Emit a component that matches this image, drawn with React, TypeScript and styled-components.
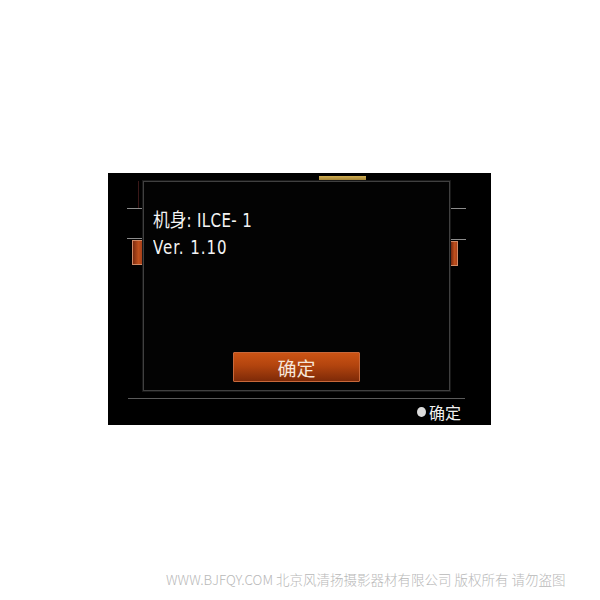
import React from "react";
import styled, { createGlobalStyle } from "styled-components";

const Global = createGlobalStyle`
  html, body { margin: 0; padding: 0; background: #ffffff; }
  * { box-sizing: border-box; }
`;

const Page = styled.div`
  width: 600px;
  height: 600px;
  display: flex;
  flex-direction: column;
  padding-top: 173px;
  padding-left: 108px;
  background: #ffffff;
  overflow: hidden;
`;

const Screen = styled.div`
  position: relative;
  width: 383px;
  height: 252px;
  background: #000000;
  display: flex;
  flex-direction: column;
`;

const TopBar = styled.div`
  height: 8px;
  display: flex;
  padding-left: 211px;
  padding-top: 3px;
`;

const GoldBar = styled.div`
  width: 47px;
  height: 5px;
  background: linear-gradient(#d0ae52, #9a7a30);
`;

const Middle = styled.div`
  height: 217px;
  display: flex;
`;

const Rail = styled.div<{ $width: number; $padTop: number; $padLeft: number }>`
  width: ${(p) => p.$width}px;
  padding-top: ${(p) => p.$padTop}px;
  padding-left: ${(p) => p.$padLeft}px;
  display: flex;
  flex-direction: column;
  align-items: flex-start;
`;

const Fill = styled.div`
  flex: 1;
`;

const VLine = styled.div`
  width: 1px;
  height: 27px;
  margin-left: 11px;
  background: #3a1818;
`;

const Tick = styled.div<{ $gapAfter?: number }>`
  width: 16px;
  height: 1px;
  background: #8c8c8c;
  margin-bottom: ${(p) => p.$gapAfter ?? 0}px;
`;

const Slider = styled.div<{ $width: number; $offset: number }>`
  width: ${(p) => p.$width}px;
  height: 25px;
  margin-top: 1px;
  margin-left: ${(p) => p.$offset}px;
  border: 1px solid #d08a66;
  background: linear-gradient(90deg, #7a2a10, #c0501c 60%, #a8401a);
`;

const Rule = styled.div`
  margin-left: 20px;
  width: 337px;
  height: 1px;
  background: #5a5a5a;
`;

const Footer = styled.div`
  display: flex;
  justify-content: flex-end;
  align-items: center;
  gap: 3px;
  padding-right: 30px;
  margin-top: 3px;
  font-family: "Noto Sans CJK SC", "DejaVu Sans", sans-serif;
  font-size: 16px;
  line-height: 20px;
  color: #f0f0f0;
`;

const Dot = styled.span`
  width: 9px;
  height: 10px;
  border-radius: 50%;
  background: #dcdcdc;
  display: inline-block;
`;

const Dialog = styled.div`
  position: absolute;
  left: 35px;
  top: 8px;
  width: 307px;
  height: 210px;
  background: #030303;
  border: 1px solid #404040;
  box-shadow: 0 0 0 1px #181818;
  display: flex;
  flex-direction: column;
  padding: 23px 0 8px 9px;
`;

const InfoLine = styled.div<{ $spacing: number }>`
  font-family: "DejaVu Sans Condensed", "DejaVu Sans", "Noto Sans CJK SC", sans-serif;
  font-stretch: condensed;
  font-size: 19px;
  line-height: 27px;
  color: #f4f4f4;
  white-space: pre;
  letter-spacing: ${(p) => p.$spacing}px;
  transform: scaleX(0.88);
  transform-origin: left center;
`;

const Cjk = styled.span`
  font-family: "Noto Sans CJK SC", sans-serif;
  letter-spacing: 0;
`;

const OkButton = styled.div`
  margin-top: auto;
  align-self: center;
  margin-left: -9px;
  width: 127px;
  height: 30px;
  border: 1px solid #c8683a;
  border-radius: 1px;
  background: linear-gradient(#cc5414 0%, #b2440e 45%, #7e2a08 100%);
  display: flex;
  align-items: center;
  justify-content: center;
  font-family: "Noto Sans CJK SC", sans-serif;
  font-size: 19px;
  color: #f6e6da;
`;

const Watermark = styled.div`
  margin-top: 146px;
  padding-left: 58px;
  font-family: "Noto Sans CJK SC", "DejaVu Sans", sans-serif;
  font-weight: 300;
  font-size: 13.5px;
  line-height: 16px;
  color: #b8b8b8;
  white-space: nowrap;
`;

export default function App() {
  return (
    <>
      <Global />
      <Page>
        <Screen>
          <TopBar>
            <GoldBar />
          </TopBar>
          <Middle>
            <Rail $width={35} $padTop={0} $padLeft={19}>
              <VLine />
              <Tick $gapAfter={29} />
              <Tick />
              <Slider $width={11} $offset={5} />
            </Rail>
            <Fill />
            <Rail $width={41} $padTop={27} $padLeft={0}>
              <Tick $gapAfter={30} />
              <Tick />
              <Slider $width={8} $offset={0} />
            </Rail>
          </Middle>
          <Rule />
          <Footer>
            <Dot />
            <span>确定</span>
          </Footer>
          <Dialog>
            <InfoLine $spacing={0.4}>
              <Cjk>机身</Cjk>: ILCE- 1
            </InfoLine>
            <InfoLine $spacing={1.1}>Ver. 1.10</InfoLine>
            <OkButton>确定</OkButton>
          </Dialog>
        </Screen>
        <Watermark>WWW.BJFQY.COM 北京风清扬摄影器材有限公司 版权所有 请勿盗图</Watermark>
      </Page>
    </>
  );
}
